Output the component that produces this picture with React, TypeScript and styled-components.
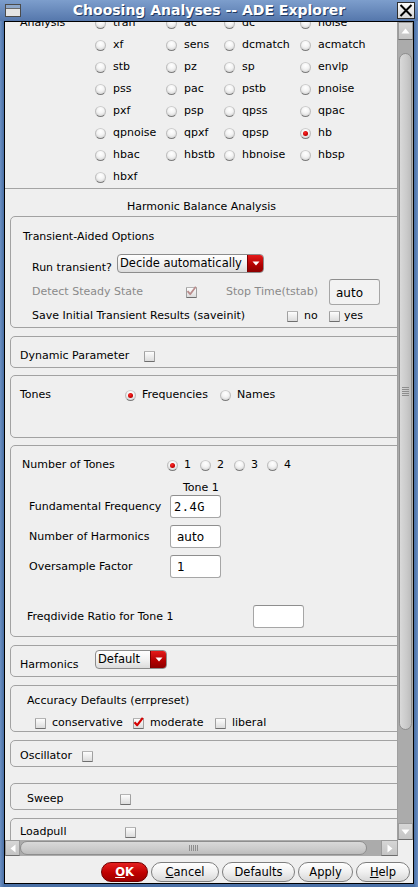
import React from "react";
import styled, { createGlobalStyle } from "styled-components";

const GlobalStyle = createGlobalStyle`
  html, body { margin: 0; padding: 0; }
  body {
    background: #5176ab;
    font-family: "DejaVu Sans", "Liberation Sans", sans-serif;
    font-size: 11px;
    color: #000;
  }
  *, *::before, *::after { box-sizing: border-box; }
`;

const Window = styled.div`
  width: 418px;
  height: 887px;
  display: flex;
  flex-direction: column;
  background: linear-gradient(90deg, #6b8fc2 0, #4a70a6 4px, #4a70a6 414px, #6b8fc2 418px);
  overflow: hidden;
`;

const TitleBar = styled.div`
  height: 21px;
  flex: none;
  display: flex;
  align-items: center;
  padding: 0 3px 0 5px;
  background: linear-gradient(#7d9ecc, #5577ac);
`;

const TitleText = styled.div`
  flex: 1;
  text-align: center;
  color: #fff;
  font-family: "DejaVu Sans", sans-serif;
  font-weight: bold;
  font-size: 14px;
  line-height: 21px;
  text-shadow: 1px 1px 0 #233c63;
  white-space: nowrap;
`;

const CloseBox = styled.div`
  width: 18px;
  height: 17px;
  border: 1px solid #2c2c2c;
  background: linear-gradient(#fbfbfb, #d6d6d6);
  display: flex;
  align-items: center;
  justify-content: center;
`;

const Body = styled.div`
  flex: 1;
  margin: 0 4px 3px 4px;
  border: 1px solid #000;
  background: #efefef;
  display: flex;
  flex-direction: column;
  overflow: hidden;
`;

const ScrollRow = styled.div`
  height: 818px;
  flex: none;
  display: flex;
`;

const Viewport = styled.div`
  width: 393px;
  flex: none;
  overflow: hidden;
  border-right: 1px solid #9f9f9f;
`;

const Content = styled.div`
  margin-top: -10px;
  width: 470px;
`;

const AnalysisGrid = styled.div`
  display: grid;
  grid-template-columns: 75px 71px 58px 76px 1fr;
  grid-auto-rows: 22px;
  padding-left: 15px;
  align-items: center;
`;

const Separator = styled.div`
  height: 1px;
  width: 393px;
  background: #a4a4a4;
`;

const SectionTitle = styled.div`
  width: 393px;
  height: 27px;
  padding-top: 11px;
  line-height: 14px;
  text-align: center;
`;

const GroupBox = styled.div<{ $mt: number; $pb: number }>`
  margin: ${(p) => p.$mt}px 0 0 5px;
  width: 440px;
  border: 1px solid #a2a2a2;
  border-radius: 5px;
  padding-bottom: ${(p) => p.$pb}px;
`;

const Row = styled.div<{ $mt: number; $h: number; $pl: number; $top?: boolean }>`
  display: flex;
  align-items: ${(p) => (p.$top ? "flex-start" : "center")};
  margin-top: ${(p) => p.$mt}px;
  height: ${(p) => p.$h}px;
  padding-left: ${(p) => p.$pl}px;
`;

const Txt = styled.span<{ $w?: number; $mt?: number; $muted?: boolean }>`
  display: inline-block;
  flex: none;
  width: ${(p) => (p.$w ? `${p.$w}px` : "auto")};
  margin-top: ${(p) => p.$mt || 0}px;
  line-height: 14px;
  white-space: nowrap;
  color: ${(p) => (p.$muted ? "#8a8a8a" : "#000")};
`;

const Option = styled.span<{ $w?: number; $gap: number }>`
  display: inline-flex;
  align-items: center;
  flex: none;
  gap: ${(p) => p.$gap}px;
  width: ${(p) => (p.$w ? `${p.$w}px` : "auto")};
  line-height: 14px;
  white-space: nowrap;
`;

const CheckCell = styled.span<{ $w: number }>`
  display: inline-flex;
  align-items: center;
  width: ${(p) => p.$w}px;
  flex: none;
`;

const RadioDot = styled.span<{ $on?: boolean }>`
  position: relative;
  display: inline-block;
  flex: none;
  width: 11px;
  height: 11px;
  border-radius: 50%;
  border: 1px solid;
  border-color: #cdcdcd #bdbdbd #7c7c7c #bdbdbd;
  background: radial-gradient(circle at 50% 30%, #ffffff 0, #f3f3f3 45%, #c9c9c9 100%);
  &::after {
    content: "";
    display: ${(p) => (p.$on ? "block" : "none")};
    position: absolute;
    left: 2px;
    top: 2px;
    width: 5px;
    height: 5px;
    border-radius: 50%;
    background: radial-gradient(circle at 40% 35%, #ff2a2a, #c80000 60%, #8a0000);
  }
`;

const CheckSq = styled.span`
  display: inline-flex;
  flex: none;
  width: 11px;
  height: 11px;
  border: 1px solid;
  border-color: #b4b4b4 #a0a0a0 #6e6e6e #a0a0a0;
  background: linear-gradient(#fdfdfd, #dcdcdc);
  border-radius: 1px;
  overflow: visible;
`;

const CheckMark = styled.svg`
  margin: -2px 0 0 -1px;
  overflow: visible;
`;

const CheckBox = ({ checked, disabled }: { checked?: boolean; disabled?: boolean }) => (
  <CheckSq>
    {checked && (
      <CheckMark width="11" height="11" viewBox="0 0 11 11">
        <path
          d="M1.5 5.2 L4.2 8.2 L9.8 0.8"
          fill="none"
          stroke={disabled ? "#b98c8c" : "#d40000"}
          strokeWidth={disabled ? 1.8 : 2.2}
          strokeLinejoin="round"
        />
      </CheckMark>
    )}
  </CheckSq>
);

const Dropdown = styled.div<{ $w: number }>`
  display: flex;
  flex: none;
  width: ${(p) => p.$w}px;
  height: 19px;
  border: 1px solid #8c8c8c;
  border-radius: 4px;
  background: linear-gradient(#ffffff, #f2f2f2 50%, #dcdcdc);
  overflow: hidden;
`;

const DropLabel = styled.span`
  flex: 1;
  padding-left: 2px;
  line-height: 16px;
  font-size: 11.5px;
  white-space: nowrap;
`;

const DropArrow = styled.span`
  width: 16px;
  flex: none;
  display: flex;
  align-items: center;
  justify-content: center;
  background: linear-gradient(#e41a1a, #b00000 60%, #8c0000);
  border-left: 1px solid #7a0000;
`;

const TextField = styled.div<{ $w: number; $h: number; $mono?: boolean; $grey?: boolean }>`
  flex: none;
  width: ${(p) => p.$w}px;
  height: ${(p) => p.$h}px;
  border: 1px solid #a6a6a6;
  border-top-color: #8e8e8e;
  border-radius: 3px;
  background: ${(p) => (p.$grey ? "#f2f2f2" : "#ffffff")};
  padding-left: ${(p) => (p.$mono ? 3 : 6)}px;
  display: flex;
  align-items: center;
  font-family: ${(p) => (p.$mono ? '"DejaVu Sans Mono", "Liberation Mono", monospace' : '"DejaVu Sans", sans-serif')};
  font-size: 12px;
  letter-spacing: ${(p) => (p.$mono ? "0.5px" : "0")};
  padding-top: 1px;
`;

/* scrollbars */
const VScroll = styled.div`
  width: 15px;
  flex: none;
  display: flex;
  flex-direction: column;
  background: #ababab;
`;

const ArrowBtn = styled.div<{ $w: number; $h: number }>`
  width: ${(p) => p.$w}px;
  height: ${(p) => p.$h}px;
  flex: none;
  display: flex;
  align-items: center;
  justify-content: center;
  background: linear-gradient(#d6d6d6, #c4c4c4);
  border: 1px solid #9a9a9a;
  border-bottom-color: #6d6d6d;
`;

const VTrack = styled.div`
  flex: 1;
  padding-top: 13px;
`;

const VThumb = styled.div`
  height: 677px;
  margin: 0 1px;
  border: 1px solid #8e8e8e;
  border-radius: 7px;
  background: linear-gradient(90deg, #d9d9d9, #cacaca 60%, #bcbcbc);
  display: flex;
  flex-direction: column;
  align-items: center;
  justify-content: center;
  gap: 1px;
`;

const GripH = styled.span`
  width: 7px;
  height: 1px;
  background: #8d8d8d;
`;

const HScrollRow = styled.div`
  height: 16px;
  flex: none;
  display: flex;
`;

const HScroll = styled.div`
  width: 393px;
  flex: none;
  display: flex;
  background: #ababab;
`;

const HTrack = styled.div`
  flex: 1;
  display: flex;
  padding: 1px 0;
`;

const HThumb = styled.div`
  width: 347px;
  border: 1px solid #8e8e8e;
  border-radius: 7px;
  background: linear-gradient(#d9d9d9, #cacaca 60%, #bcbcbc);
  display: flex;
  align-items: center;
  justify-content: center;
  gap: 1px;
`;

const GripV = styled.span`
  width: 1px;
  height: 6px;
  background: #8d8d8d;
`;

const Corner = styled.div`
  flex: 1;
  background: #efefef;
`;

const ButtonRow = styled.div`
  flex: 1;
  display: flex;
  justify-content: flex-end;
  align-items: flex-start;
  padding: 6px 3px 0 0;
  gap: 3px;
`;

const PushButton = styled.div<{ $w: number; $primary?: boolean }>`
  width: ${(p) => p.$w}px;
  height: 20px;
  border: 1px solid ${(p) => (p.$primary ? "#6e0000" : "#7e7e7e")};
  border-radius: 10px;
  background: ${(p) =>
    p.$primary
      ? "linear-gradient(#e42020, #c00000 55%, #9c0000)"
      : "linear-gradient(#ffffff, #f0f0f0 50%, #d8d8d8)"};
  color: ${(p) => (p.$primary ? "#fff" : "#000")};
  font-weight: ${(p) => (p.$primary ? "bold" : "normal")};
  font-size: 11.5px;
  display: flex;
  align-items: center;
  justify-content: center;
  line-height: 14px;
`;

const UpTri = () => (
  <svg width="9" height="6" viewBox="0 0 9 6">
    <path d="M4.5 0.5 L8.5 5.5 L0.5 5.5 Z" fill="#fff" />
  </svg>
);
const DownTri = () => (
  <svg width="9" height="6" viewBox="0 0 9 6">
    <path d="M0.5 0.5 L8.5 0.5 L4.5 5.5 Z" fill="#fff" />
  </svg>
);
const LeftTri = () => (
  <svg width="6" height="9" viewBox="0 0 6 9">
    <path d="M0.5 4.5 L5.5 0.5 L5.5 8.5 Z" fill="#fff" />
  </svg>
);
const RightTri = () => (
  <svg width="6" height="9" viewBox="0 0 6 9">
    <path d="M5.5 4.5 L0.5 0.5 L0.5 8.5 Z" fill="#fff" />
  </svg>
);
const DropTri = () => (
  <svg width="8" height="5" viewBox="0 0 8 5">
    <path d="M0.5 0.5 L7.5 0.5 L4 4.5 Z" fill="#fff" />
  </svg>
);

const WinIcon = () => (
  <svg width="16" height="13" viewBox="0 0 16 13">
    <rect x="0.5" y="0.5" width="15" height="12" fill="#e4e4e4" stroke="#4b4b4b" />
    <rect x="1" y="1" width="14" height="3" fill="#8ea7c9" />
    <line x1="1" y1="4.5" x2="15" y2="4.5" stroke="#6a6a6a" />
  </svg>
);

const analyses = [
  ["tran", "ac", "dc", "noise"],
  ["xf", "sens", "dcmatch", "acmatch"],
  ["stb", "pz", "sp", "envlp"],
  ["pss", "pac", "pstb", "pnoise"],
  ["pxf", "psp", "qpss", "qpac"],
  ["qpnoise", "qpxf", "qpsp", "hb"],
  ["hbac", "hbstb", "hbnoise", "hbsp"],
  ["hbxf"],
];

export default function App() {
  return (
    <>
      <GlobalStyle />
      <Window>
        <TitleBar>
          <WinIcon />
          <TitleText>Choosing Analyses -- ADE Explorer</TitleText>
          <CloseBox>
            <svg width="14" height="13" viewBox="0 0 14 13">
              <path d="M1.5 1 L12.5 12 M12.5 1 L1.5 12" stroke="#000" strokeWidth="2" />
            </svg>
          </CloseBox>
        </TitleBar>
        <Body>
          <ScrollRow>
            <Viewport>
              <Content>
                <AnalysisGrid>
                  {analyses.map((row, ri) => (
                    <React.Fragment key={ri}>
                      <Txt>{ri === 0 ? "Analysis" : ""}</Txt>
                      {row.map((a) => (
                        <Option key={a} $gap={7}>
                          <RadioDot $on={a === "hb"} />
                          {a}
                        </Option>
                      ))}
                      {Array.from({ length: 4 - row.length }).map((_, i) => (
                        <span key={`e${i}`} />
                      ))}
                    </React.Fragment>
                  ))}
                </AnalysisGrid>
                <Separator />
                <SectionTitle>Harmonic Balance Analysis</SectionTitle>

                <GroupBox $mt={0} $pb={3}>
                  <Row $mt={12} $h={16} $pl={12}>
                    <Txt>Transient-Aided Options</Txt>
                  </Row>
                  <Row $mt={9} $h={19} $pl={21} $top>
                    <Txt $w={85} $mt={7}>Run transient?</Txt>
                    <Dropdown $w={147}>
                      <DropLabel>Decide automatically</DropLabel>
                      <DropArrow>
                        <DropTri />
                      </DropArrow>
                    </Dropdown>
                  </Row>
                  <Row $mt={6} $h={26} $pl={21}>
                    <Txt $w={154} $muted>Detect Steady State</Txt>
                    <CheckCell $w={40}>
                      <CheckBox checked disabled />
                    </CheckCell>
                    <Txt $w={103} $muted>Stop Time(tstab)</Txt>
                    <TextField $w={51} $h={26} $grey>auto</TextField>
                  </Row>
                  <Row $mt={3} $h={16} $pl={21}>
                    <Txt $w={255}>Save Initial Transient Results (saveinit)</Txt>
                    <Option $w={42} $gap={6}>
                      <CheckBox />
                      no
                    </Option>
                    <Option $gap={4}>
                      <CheckBox />
                      yes
                    </Option>
                  </Row>
                </GroupBox>

                <GroupBox $mt={8} $pb={3}>
                  <Row $mt={11} $h={16} $pl={9}>
                    <Txt $w={124}>Dynamic Parameter</Txt>
                    <CheckBox />
                  </Row>
                </GroupBox>

                <GroupBox $mt={7} $pb={34}>
                  <Row $mt={11} $h={16} $pl={9}>
                    <Txt $w={105}>Tones</Txt>
                    <Option $w={95} $gap={6}>
                      <RadioDot $on />
                      Frequencies
                    </Option>
                    <Option $gap={6}>
                      <RadioDot />
                      Names
                    </Option>
                  </Row>
                </GroupBox>

                <GroupBox $mt={7} $pb={8}>
                  <Row $mt={11} $h={16} $pl={11}>
                    <Txt $w={145}>Number of Tones</Txt>
                    <Option $w={33} $gap={6}>
                      <RadioDot $on />1
                    </Option>
                    <Option $w={34} $gap={6}>
                      <RadioDot />2
                    </Option>
                    <Option $w={33} $gap={6}>
                      <RadioDot />3
                    </Option>
                    <Option $gap={6}>
                      <RadioDot />4
                    </Option>
                  </Row>
                  <Row $mt={8} $h={14} $pl={172}>
                    <Txt>Tone 1</Txt>
                  </Row>
                  <Row $mt={0} $h={23} $pl={18}>
                    <Txt $w={141}>Fundamental Frequency</Txt>
                    <TextField $w={51} $h={23} $mono>2.4G</TextField>
                  </Row>
                  <Row $mt={7} $h={23} $pl={18}>
                    <Txt $w={141}>Number of Harmonics</Txt>
                    <TextField $w={51} $h={23}>auto</TextField>
                  </Row>
                  <Row $mt={7} $h={23} $pl={18}>
                    <Txt $w={141}>Oversample Factor</Txt>
                    <TextField $w={51} $h={23}>1</TextField>
                  </Row>
                  <Row $mt={27} $h={23} $pl={16}>
                    <Txt $w={226}>Freqdivide Ratio for Tone 1</Txt>
                    <TextField $w={51} $h={23} />
                  </Row>
                </GroupBox>

                <GroupBox $mt={8} $pb={7}>
                  <Row $mt={4} $h={19} $pl={9} $top>
                    <Txt $w={75} $mt={8}>Harmonics</Txt>
                    <Dropdown $w={72}>
                      <DropLabel>Default</DropLabel>
                      <DropArrow>
                        <DropTri />
                      </DropArrow>
                    </Dropdown>
                  </Row>
                </GroupBox>

                <GroupBox $mt={8} $pb={1}>
                  <Row $mt={7} $h={16} $pl={16}>
                    <Txt>Accuracy Defaults (errpreset)</Txt>
                  </Row>
                  <Row $mt={7} $h={14} $pl={24}>
                    <Option $w={98} $gap={6}>
                      <CheckBox />
                      conservative
                    </Option>
                    <Option $w={82} $gap={6}>
                      <CheckBox checked />
                      moderate
                    </Option>
                    <Option $gap={6}>
                      <CheckBox />
                      liberal
                    </Option>
                  </Row>
                </GroupBox>

                <GroupBox $mt={8} $pb={2}>
                  <Row $mt={7} $h={16} $pl={9}>
                    <Txt $w={62}>Oscillator</Txt>
                    <CheckBox />
                  </Row>
                </GroupBox>

                <GroupBox $mt={16} $pb={2}>
                  <Row $mt={7} $h={16} $pl={16}>
                    <Txt $w={93}>Sweep</Txt>
                    <CheckBox />
                  </Row>
                </GroupBox>

                <GroupBox $mt={8} $pb={20}>
                  <Row $mt={5} $h={16} $pl={9}>
                    <Txt $w={105}>Loadpull</Txt>
                    <CheckBox />
                  </Row>
                </GroupBox>
              </Content>
            </Viewport>
            <VScroll>
              <ArrowBtn $w={15} $h={18}>
                <UpTri />
              </ArrowBtn>
              <VTrack>
                <VThumb>
                  <GripH />
                  <GripH />
                  <GripH />
                  <GripH />
                  <GripH />
                </VThumb>
              </VTrack>
              <ArrowBtn $w={15} $h={17}>
                <DownTri />
              </ArrowBtn>
            </VScroll>
          </ScrollRow>
          <HScrollRow>
            <HScroll>
              <ArrowBtn $w={15} $h={16}>
                <LeftTri />
              </ArrowBtn>
              <HTrack>
                <HThumb>
                  <GripV />
                  <GripV />
                  <GripV />
                  <GripV />
                  <GripV />
                </HThumb>
              </HTrack>
              <ArrowBtn $w={17} $h={16}>
                <RightTri />
              </ArrowBtn>
            </HScroll>
            <Corner />
          </HScrollRow>
          <ButtonRow>
            <PushButton $w={47} $primary>
              <u>O</u>K
            </PushButton>
            <PushButton $w={68}>
              <u>C</u>ancel
            </PushButton>
            <PushButton $w={73}>Defaults</PushButton>
            <PushButton $w={55}>Apply</PushButton>
            <PushButton $w={54}>
              <u>H</u>elp
            </PushButton>
          </ButtonRow>
        </Body>
      </Window>
    </>
  );
}
